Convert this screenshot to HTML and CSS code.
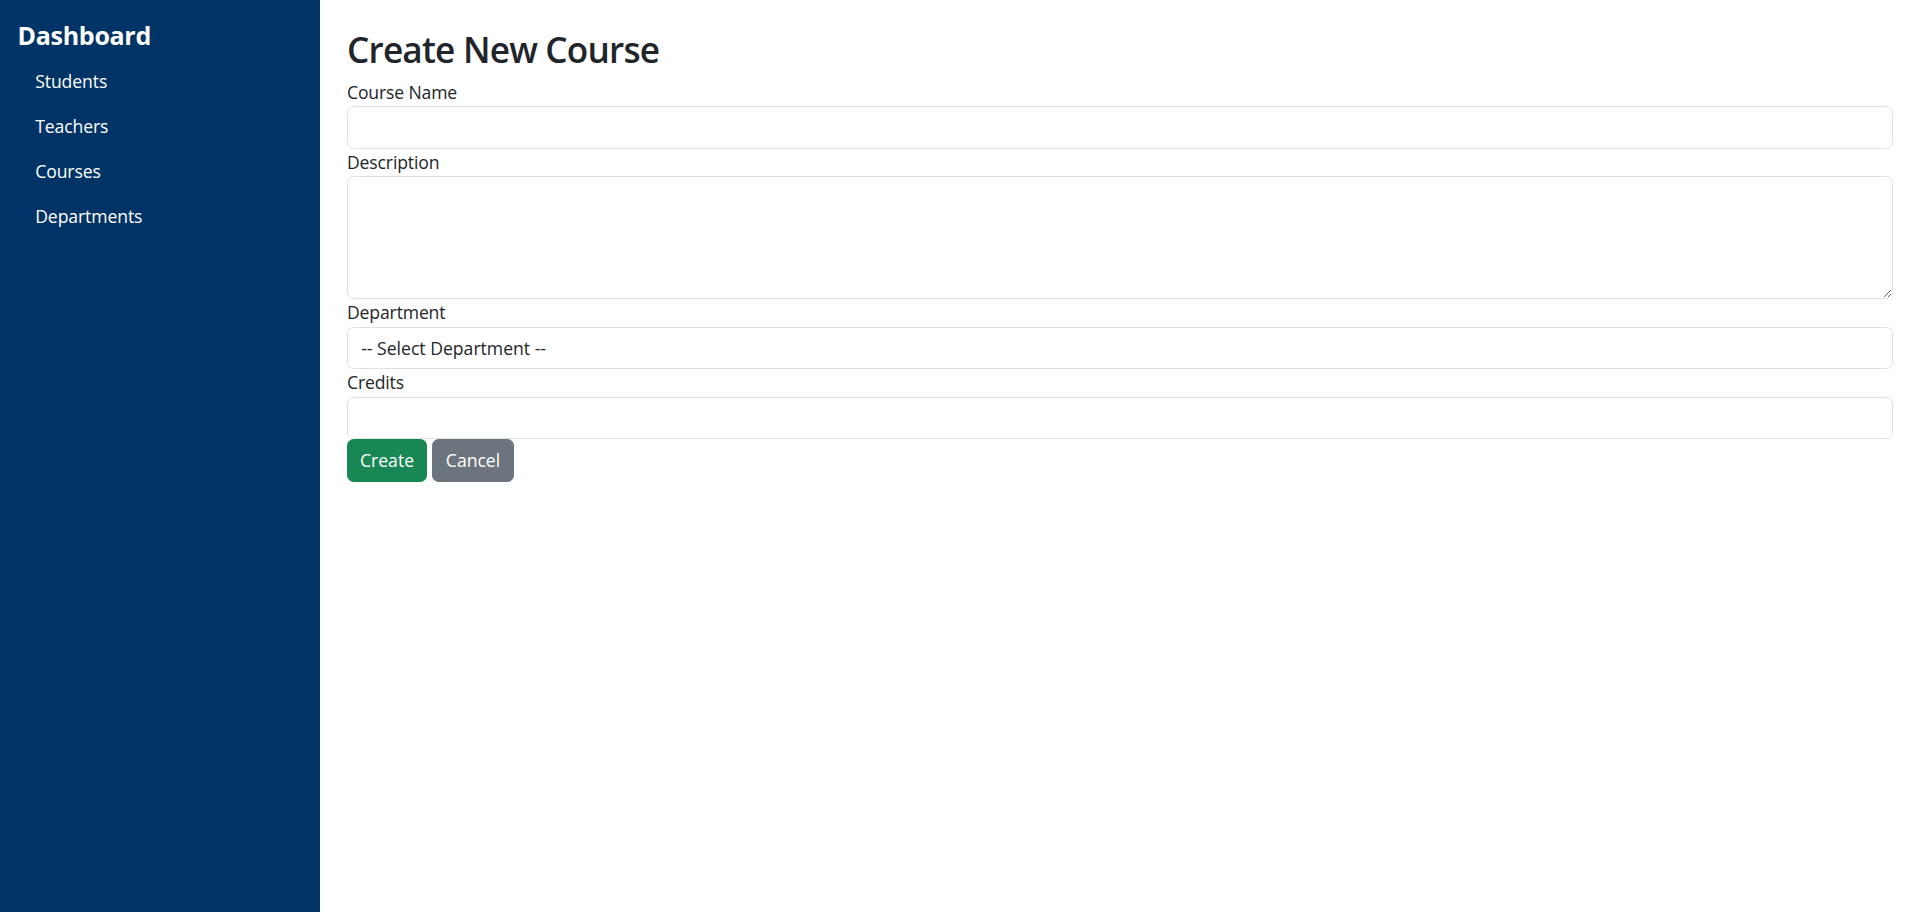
FILE: index.html
```html
<!DOCTYPE html>
<html lang="en">
<head>
<meta charset="utf-8">
<title>Create New Course</title>
<link rel="stylesheet" href="styles.css">
</head>
<body>
<div class="layout">
  <aside class="sidebar">
    <h4 class="brand">Dashboard</h4>
    <ul class="nav">
      <li><a class="nav-link" href="#">Students</a></li>
      <li><a class="nav-link" href="#">Teachers</a></li>
      <li><a class="nav-link" href="#">Courses</a></li>
      <li><a class="nav-link" href="#">Departments</a></li>
    </ul>
  </aside>
  <main class="main">
    <h2 class="title">Create New Course</h2>
    <form class="form">
      <label class="label" for="name">Course Name</label>
      <input class="control" id="name" type="text">
      <label class="label" for="desc">Description</label>
      <textarea class="control area" id="desc"></textarea>
      <label class="label" for="dept">Department</label>
      <select class="control select" id="dept">
        <option>-- Select Department --</option>
      </select>
      <label class="label" for="credits">Credits</label>
      <input class="control" id="credits" type="number">
      <div class="actions">
        <button type="button" class="btn btn-success">Create</button>
        <a href="#" class="btn btn-secondary">Cancel</a>
      </div>
    </form>
  </main>
</div>
</body>
</html>
```

FILE: styles.css
```css
* { box-sizing: border-box; }
html, body { margin: 0; padding: 0; height: 100%; }
body {
  font-family: "Open Sans", "Noto Sans", sans-serif;
  font-size: 17.6px;
  line-height: 26.4px;
  color: #212529;
  background: #fff;
}
.layout {
  display: flex;
  min-height: 912px;
}
.sidebar {
  width: 320px;
  flex: 0 0 320px;
  background: #003366;
  color: #fff;
  padding: 19.5px 17.6px 17.6px;
}
.brand {
  margin: 0 0 8px;
  font-size: 25px;
  line-height: 31.7px;
  font-weight: 700;
  letter-spacing: -0.3px;
}
.nav {
  list-style: none;
  margin: 0;
  padding: 0;
}
.nav li { height: 45px; }
.nav-link {
  display: block;
  padding: 9px 17.6px;
  color: #fff;
  text-decoration: none;
  letter-spacing: -0.1px;
}
.main {
  flex: 1;
  padding: 27.5px 27px;
}
.title {
  margin: 0 0 8.8px;
  font-size: 35.2px;
  line-height: 42.2px;
  font-weight: 600;
  letter-spacing: -0.8px;
}
.form {
  display: flex;
  flex-direction: column;
}
.label {
  display: block;
  height: 27.5px;
  line-height: 27.5px;
  letter-spacing: -0.15px;
}
.control {
  display: block;
  width: 100%;
  height: 42.5px;
  padding: 6.6px 13.2px;
  font: inherit;
  color: #212529;
  background: #fff;
  border: 1.1px solid #dee2e6;
  border-radius: 6.6px;
  outline: none;
  margin: 0;
}
.area {
  height: 123px;
  resize: vertical;
}
.select {
  appearance: none;
  -webkit-appearance: none;
}
input[type=number]::-webkit-inner-spin-button,
input[type=number]::-webkit-outer-spin-button { -webkit-appearance: none; margin: 0; }
.actions {
  display: flex;
  gap: 5px;
}
.btn {
  display: inline-flex;
  align-items: center;
  justify-content: center;
  height: 43px;
  padding: 0 13px;
  font: inherit;
  color: #fff;
  border: 1px solid transparent;
  border-radius: 6.6px;
  text-decoration: none;
  cursor: pointer;
}
.btn-success { background: #198754; border-color: #198754; width: 80px; }
.btn-secondary { background: #6c757d; border-color: #6c757d; width: 82px; }
```
